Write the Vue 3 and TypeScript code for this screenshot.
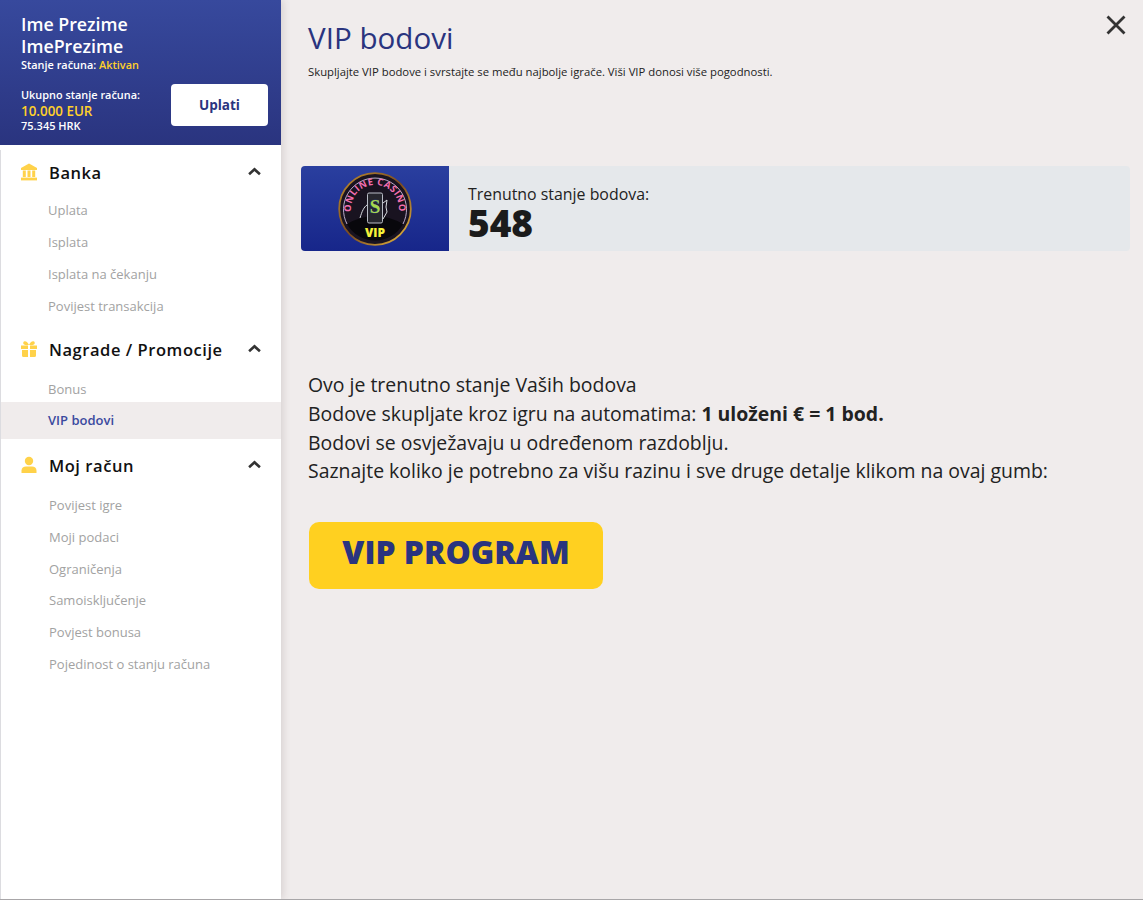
<script setup lang="ts">
interface Group { title: string; icon: string; items: { label: string; active?: boolean }[]; cls: string }
const groups: Group[] = [
  { title: 'Banka', icon: 'bank', cls: 'g-a', items: [{ label: 'Uplata' }, { label: 'Isplata' }, { label: 'Isplata na čekanju' }, { label: 'Povijest transakcija' }] },
  { title: 'Nagrade / Promocije', icon: 'gift', cls: 'g-m', items: [{ label: 'Bonus' }, { label: 'VIP bodovi', active: true }] },
  { title: 'Moj račun', icon: 'user', cls: 'g-b', items: [{ label: 'Povijest igre' }, { label: 'Moji podaci' }, { label: 'Ograničenja' }, { label: 'Samoisključenje' }, { label: 'Povjest bonusa' }, { label: 'Pojedinost o stanju računa' }] }
]
</script>

<template>
  <div class="page">
    <aside class="side">
      <header class="head">
        <div class="name">Ime Prezime<br />ImePrezime</div>
        <div class="status">Stanje računa: <span class="gold">Aktivan</span></div>
        <div class="bal-row">
          <div class="bal">
            <div class="bal-label">Ukupno stanje računa:</div>
            <div class="bal-eur">10.000 EUR</div>
            <div class="bal-hrk">75.345 HRK</div>
          </div>
          <button class="pay">Uplati</button>
        </div>
      </header>
      <nav class="nav">
        <section v-for="g in groups" :key="g.title" :class="g.cls">
          <div class="g-head">
            <svg v-if="g.icon === 'bank'" class="g-icon" viewBox="0 0 18 18" fill="#ffd24a">
              <path d="M9 .5 1 5v2h16V5z" />
              <path d="M2.800 7.600h3v6.400h-3zM7.500 7.600h3v6.400h-3zM12.200 7.600h3v6.400h-3z" />
              <path d="M1 14.600h16v2.800H1z" />
            </svg>
            <svg v-else-if="g.icon === 'gift'" class="g-icon" viewBox="0 0 18 18" fill="#ffd24a">
              <path d="M1 5.500h7v3.500H1zM10 5.500h7v3.500h-7zM2 10h6v7H3.500A1.500 1.500 0 0 1 2 15.500zM10 10h6v5.500a1.500 1.500 0 0 1-1.500 1.500H10z" />
              <path d="M9 5C7.500 1.800 5.800 1 4.500 1.300 3 1.700 2.800 3.600 4 4.500 5 5.200 7 5.300 9 5zm0 0c1.500-3.200 3.200-4 4.500-3.700 1.500.4 1.700 2.300.5 3.200-1 .7-3 .8-5 .5z" />
            </svg>
            <svg v-else class="g-icon" viewBox="0 0 18 18" fill="#ffd24a">
              <circle cx="9" cy="5" r="4.200" />
              <path d="M1.500 17v-2.500c0-2.500 2-4 4.500-4h6c2.500 0 4.500 1.500 4.500 4V17z" />
            </svg>
            <span class="g-title">{{ g.title }}</span>
            <svg class="chev" viewBox="0 0 12 8" fill="none" stroke="#333" stroke-width="2.400"><path d="M1 6.500 6 2l5 4.500" /></svg>
          </div>
          <a v-for="i in g.items" :key="i.label" class="item" :class="{ active: i.active }">{{ i.label }}</a>
        </section>
      </nav>
    </aside>

    <main class="main">
      <svg class="close" viewBox="0 0 20 20" fill="none" stroke="#333" stroke-width="2.800"><path d="M1.500 1.500l17 17M18.500 1.500l-17 17" /></svg>
      <h1 class="title">VIP bodovi</h1>
      <p class="sub">Skupljajte VIP bodove i svrstajte se među najbolje igrače. Viši VIP donosi više pogodnosti.</p>

      <div class="points">
        <div class="logo-cell">
          <svg class="logo" viewBox="0 0 74 74">
            <defs>
              <linearGradient id="ring" x1="0" y1="0" x2="1" y2="1">
                <stop offset="0" stop-color="#c0902e" /><stop offset=".5" stop-color="#7a4a20" /><stop offset="1" stop-color="#f0c040" />
              </linearGradient>
              <path id="arc" d="M15.200 47A24 24 0 1 1 58.800 47" />
            </defs>
            <circle cx="37" cy="37" r="35.800" fill="#191320" stroke="url(#ring)" stroke-width="1.800" />
            <path d="M9 52Q37 36 65 52A32 32 0 0 1 9 52z" fill="#08070c" />
            <path d="M9 52A31.500 31.500 0 1 1 65 52" fill="none" stroke="#cdbcdc" stroke-width=".9" />
            <text class="neon"><textPath href="#arc" startOffset="50%" text-anchor="middle">ONLINE CASINO</textPath></text>
            <rect x="29.500" y="21" width="15" height="30" rx="1.500" fill="#26262e" stroke="#b9bcc6" stroke-width="1" />
            <path d="M29 33c-3 2-5 6-7 13M45 31l4-3-1 7 1 5-4 7" fill="none" stroke="#d8dce0" stroke-width="1" />
            <text class="s" x="37" y="41">S</text>
            <text class="vip" x="37" y="65">VIP</text>
          </svg>
        </div>
        <div class="pts-text">
          <div class="pts-label">Trenutno stanje bodova:</div>
          <div class="pts-val">548</div>
        </div>
      </div>

      <div class="copy">
        Ovo je trenutno stanje Vaših bodova<br />
        Bodove skupljate kroz igru na automatima: <b>1 uloženi € = 1 bod.</b><br />
        Bodovi se osvježavaju u određenom razdoblju.<br />
        Saznajte koliko je potrebno za višu razinu i sve druge detalje klikom na ovaj gumb:
      </div>

      <button class="vip-btn">VIP PROGRAM</button>
    </main>
  </div>
</template>

<style>
html, body { margin: 0; padding: 0; background: #f0ecec; }
</style>

<style scoped>
.page { display: flex; width: 1143px; height: 900px; box-sizing: border-box; border-bottom: 1px solid #a8a6a8; overflow: hidden; font-family: "Open Sans", sans-serif; background: #f0ecec; }
.side { width: 281px; flex: none; background: #fff; box-shadow: 2px 0 7px rgba(90, 70, 70, .16); position: relative; z-index: 1; }
.head { height: 145px; box-sizing: border-box; padding: 13px 13px 0 21px; color: #fff; background: linear-gradient(#37499d, #2a347f); }
.name { font-size: 17.800px; line-height: 22px; font-weight: 600; }
.status { font-size: 10.900px; line-height: 15px; font-weight: 600; }
.gold { color: #ffd02a; }
.bal-row { display: flex; justify-content: space-between; margin-top: 12px; }
.bal { padding-top: 3px; }
.bal-label { font-size: 10.900px; line-height: 15px; font-weight: 600; }
.bal-eur { font-size: 13.400px; line-height: 17px; font-weight: 600; color: #ffd02a; margin-top: 1px; }
.bal-hrk { font-size: 11px; line-height: 13px; font-weight: 600; margin-top: -1px; }
.pay { width: 97px; height: 42px; border: 0; border-radius: 4px; background: #fff; color: #2a347f; font: 700 13.500px "Open Sans", sans-serif; padding: 0; }
.nav { border-left: 1px solid #dcdce0; height: 754px; box-sizing: border-box; }
.g-head { height: 44px; padding: 0 20px 0 19px; display: flex; align-items: center; }
.g-a .g-head { margin-top: 5px; }
.g-m .g-head { margin-top: 5px; margin-bottom: 2px; }
.g-b .g-head { margin-top: 4px; margin-bottom: 3px; }
.g-icon { width: 18px; height: 18px; flex: none; margin-right: 11px; }
.g-title { flex: 1; font-size: 16.500px; font-weight: 600; color: #111; letter-spacing: .55px; }
.chev { width: 13px; height: 9px; flex: none; margin-top: -1px; }
.item { display: block; height: 32px; line-height: 32px; padding-left: 47px; font-size: 13px; color: #a2a2a2; }
.g-b .item { height: 31.800px; line-height: 31.800px; padding-left: 48px; }
.item.active { height: 37px; line-height: 37px; margin-top: -3px; background: #f0ecec; color: #3b4a9f; font-weight: 600; }
.main { flex: 1; position: relative; padding: 0 13px 0 20px; min-width: 0; }
.close { position: absolute; top: 15px; right: 17px; width: 20px; height: 20px; }
.title { margin: 16px 0 0 7px; font-size: 29.600px; line-height: 44px; font-weight: 400; color: #2a347f; }
.sub { margin: 4px 0 0 7px; font-size: 11.300px; line-height: 15px; color: #222; }
.points { margin-top: 87px; height: 85px; display: flex; background: #e5e8eb; border-radius: 4px; overflow: hidden; }
.logo-cell { width: 148px; flex: none; display: flex; align-items: center; justify-content: center; background: linear-gradient(#2a3f9f, #17268a); }
.logo { width: 74px; height: 74px; display: block; }
.neon { font: 700 9.400px "Open Sans", sans-serif; fill: #f46fb0; letter-spacing: .5px; }
.s { font: 700 19px "Liberation Serif", serif; fill: #a6d74a; stroke: #2b4fa8; stroke-width: .6px; paint-order: stroke; text-anchor: middle; }
.vip { font: 800 12px "Open Sans", sans-serif; fill: #f6f23a; text-anchor: middle; }
.pts-text { padding: 18px 0 0 19px; }
.pts-label { font-size: 15.900px; line-height: 20px; color: #222; }
.pts-val { font-size: 37px; line-height: 37px; font-weight: 800; color: #1b1b1b; }
.copy { margin: 120px 0 0 7px; font-size: 19.450px; line-height: 28.800px; color: #222; }
.copy b { font-weight: 700; }
.vip-btn { display: block; margin: 36px 0 0 8px; width: 294px; height: 67px; border: 0; border-radius: 10px; background: #ffd020; color: #2a347f; font: 800 31.800px/60px "Open Sans", sans-serif; padding: 0 0 7px; }
</style>
